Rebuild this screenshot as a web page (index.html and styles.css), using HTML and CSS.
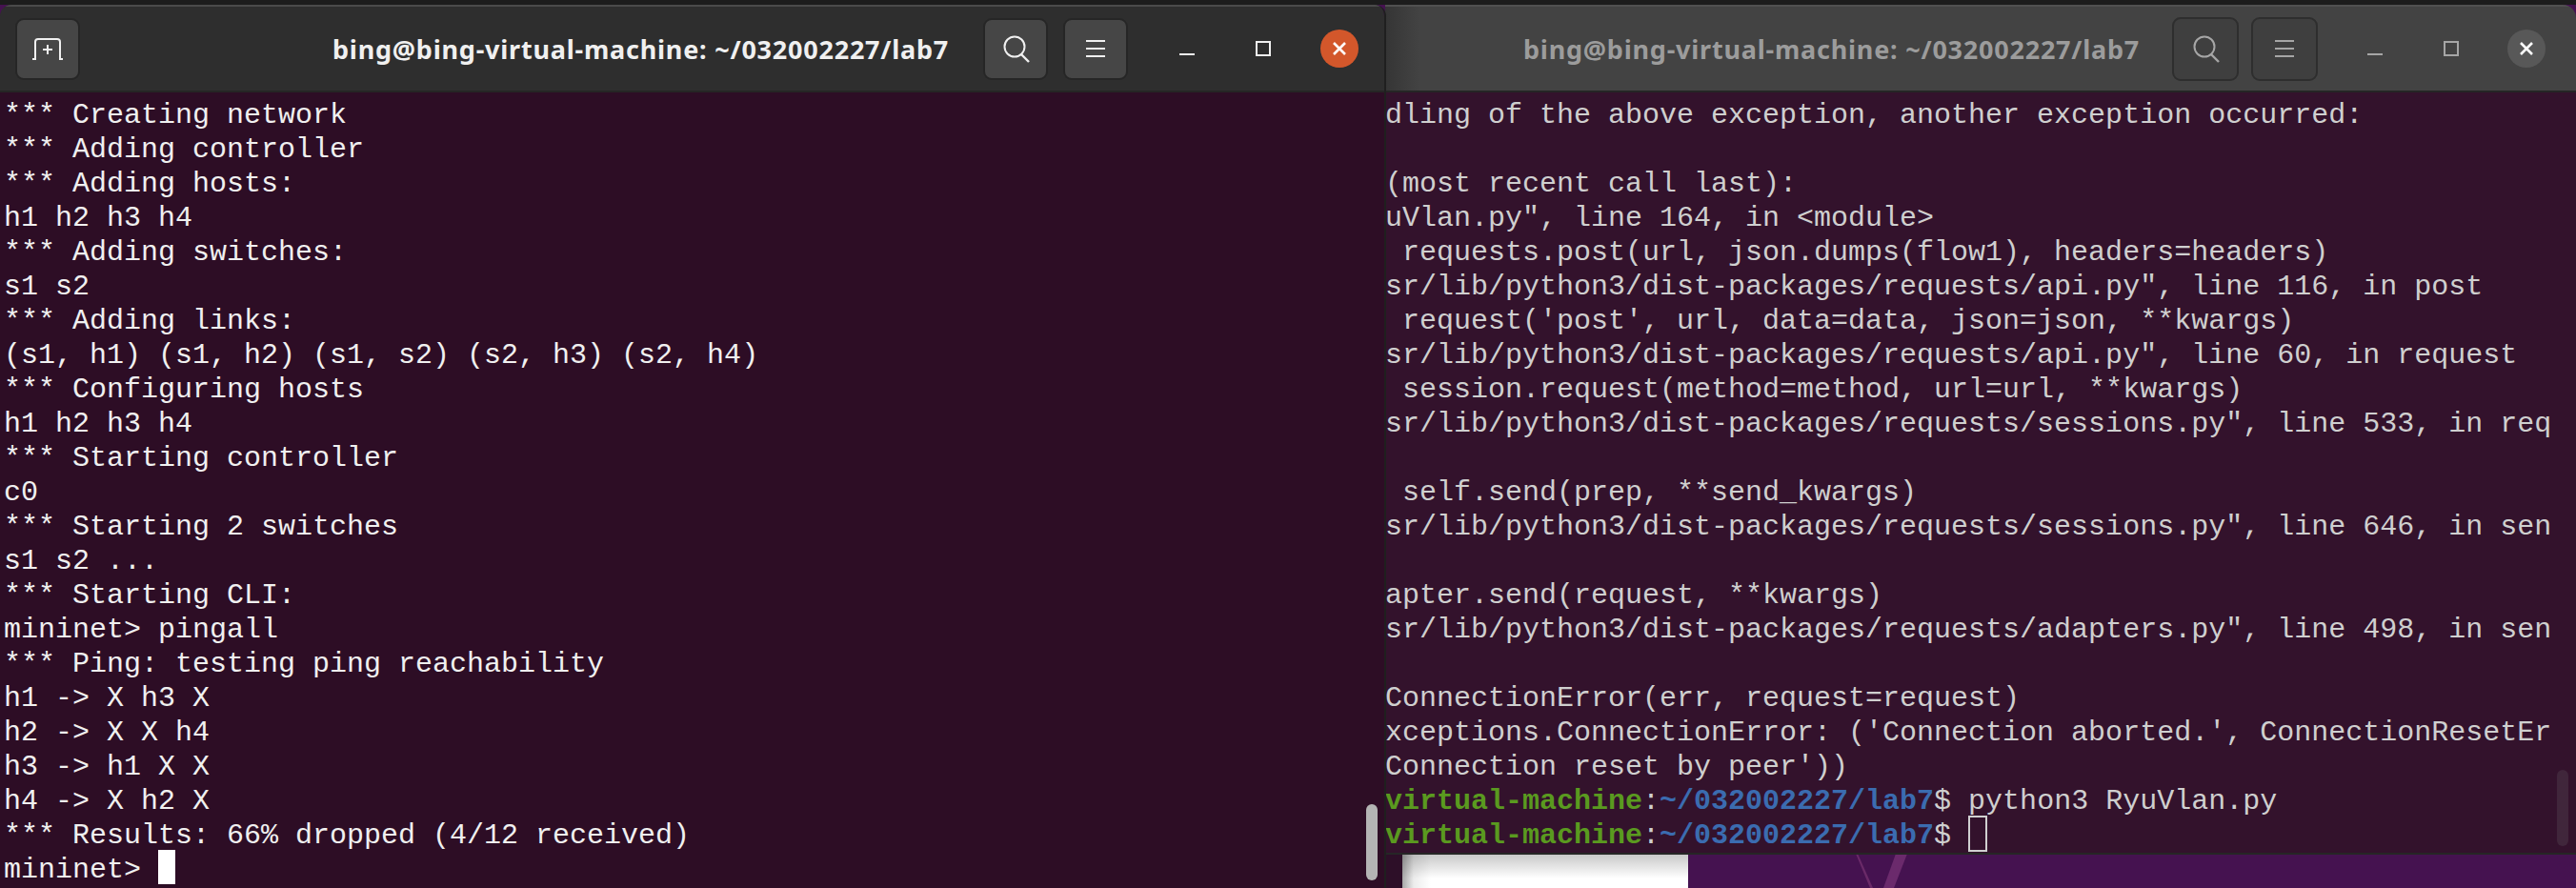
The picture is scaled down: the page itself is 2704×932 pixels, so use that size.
FILE: index.html
```html
<!DOCTYPE html>
<html lang="en">
<head>
<meta charset="utf-8">
<title>Terminals</title>
<link rel="stylesheet" href="styles.css">
</head>
<body>
<div class="desktop">
  <div class="topbar"></div>
  <svg class="streaks" width="100" height="40" viewBox="0 0 100 40"><path d="M8 0 L10 0 L26 36 L23 36 Z" fill="#6a2a68"/><path d="M50 0 L62 0 L48 36 L37 36 Z" fill="#6b2a6c"/></svg>
  <div class="sheet"></div>

  <section class="win win-right">
    <header class="bar">
      <h1 class="title">bing@bing-virtual-machine: ~/032002227/lab7</h1>
      <button class="btn"><svg width="32" height="32" viewBox="0 0 32 32"><circle cx="15" cy="14" r="10.5" fill="none" stroke="currentColor" stroke-width="2"/><path d="M22 22 L30 30" stroke="currentColor" stroke-width="2.4"/></svg></button>
      <button class="btn"><svg width="22" height="20" viewBox="0 0 22 20"><path d="M1 2H21M1 10H21M1 18H21" stroke="currentColor" stroke-width="2"/></svg></button>
      <span class="wc wc-min"></span>
      <span class="wc wc-max"></span>
      <span class="wc wc-close"><svg width="16" height="16" viewBox="0 0 16 16"><path d="M2 2L14 14M14 2L2 14" stroke="#fff" stroke-width="2.6"/></svg></span>
    </header>
    <pre class="term">dling of the above exception, another exception occurred:

(most recent call last):
uVlan.py", line 164, in &lt;module&gt;
 requests.post(url, json.dumps(flow1), headers=headers)
sr/lib/python3/dist-packages/requests/api.py", line 116, in post
 request('post', url, data=data, json=json, **kwargs)
sr/lib/python3/dist-packages/requests/api.py", line 60, in request
 session.request(method=method, url=url, **kwargs)
sr/lib/python3/dist-packages/requests/sessions.py", line 533, in req

 self.send(prep, **send_kwargs)
sr/lib/python3/dist-packages/requests/sessions.py", line 646, in sen

apter.send(request, **kwargs)
sr/lib/python3/dist-packages/requests/adapters.py", line 498, in sen

ConnectionError(err, request=request)
xceptions.ConnectionError: ('Connection aborted.', ConnectionResetEr
Connection reset by peer'))
<b class="host">virtual-machine</b>:<b class="path">~/032002227/lab7</b>$ python3 RyuVlan.py
<b class="host">virtual-machine</b>:<b class="path">~/032002227/lab7</b>$ <span class="cursor-hollow"> </span></pre>
    <div class="thumb thumb-dim"></div>
  </section>

  <section class="win win-left">
    <header class="bar">
      <button class="btn btn-add"><svg width="32" height="24" viewBox="0 0 32 24"><path d="M0 23H3V5Q3 2 6 2H26Q29 2 29 5V23H32" fill="none" stroke="currentColor" stroke-width="2"/><path d="M16 8V18M11 13H21" stroke="currentColor" stroke-width="2"/></svg></button>
      <h1 class="title">bing@bing-virtual-machine: ~/032002227/lab7</h1>
      <button class="btn"><svg width="32" height="32" viewBox="0 0 32 32"><circle cx="15" cy="14" r="10.5" fill="none" stroke="currentColor" stroke-width="2"/><path d="M22 22 L30 30" stroke="currentColor" stroke-width="2.4"/></svg></button>
      <button class="btn"><svg width="22" height="20" viewBox="0 0 22 20"><path d="M1 2H21M1 10H21M1 18H21" stroke="currentColor" stroke-width="2"/></svg></button>
      <span class="wc wc-min"></span>
      <span class="wc wc-max"></span>
      <span class="wc wc-close"><svg width="16" height="16" viewBox="0 0 16 16"><path d="M2 2L14 14M14 2L2 14" stroke="#fff" stroke-width="2.6"/></svg></span>
    </header>
    <pre class="term">*** Creating network
*** Adding controller
*** Adding hosts:
h1 h2 h3 h4
*** Adding switches:
s1 s2
*** Adding links:
(s1, h1) (s1, h2) (s1, s2) (s2, h3) (s2, h4)
*** Configuring hosts
h1 h2 h3 h4
*** Starting controller
c0
*** Starting 2 switches
s1 s2 ...
*** Starting CLI:
mininet&gt; pingall
*** Ping: testing ping reachability
h1 -&gt; X h3 X
h2 -&gt; X X h4
h3 -&gt; h1 X X
h4 -&gt; X h2 X
*** Results: 66% dropped (4/12 received)
mininet&gt; <span class="cursor-solid"> </span></pre>
    <div class="thumb"></div>
  </section>
</div>
</body>
</html>
```
FILE: styles.css
```css
* { box-sizing: border-box; }
html, body { margin: 0; padding: 0; }
body { width: 2704px; height: 932px; overflow: hidden; background: #451250; }

.desktop { position: relative; width: 2704px; height: 932px; overflow: hidden; background: #451250; }
.topbar { position: absolute; left: 0; top: 0; width: 100%; height: 5px; background: #1c1c1c; }
.streaks { position: absolute; left: 1940px; top: 896px; }
.sheet {
  position: absolute; left: 1454px; top: 896px; width: 318px; height: 36px;
  border-left: 18px solid #2d0f28;
  background: linear-gradient(180deg, rgba(0,0,0,0.22) 0, rgba(0,0,0,0) 26px), linear-gradient(90deg, #a8a8a8 0, #ececec 12px, #fff 30px), #fff;
}

.win { position: absolute; top: 5px; display: flex; flex-direction: column; overflow: hidden; }
.win-left { left: 0; width: 1455px; height: 927px; z-index: 2; border-radius: 12px 12px 0 0; border-right: 2px solid #1f1f1f; --bar: #2e2e2e; --term: #2d0d25; --fg: #f0f0f0; color: #f0f0f0; }
.win-right { left: 1454px; width: 1250px; height: 892px; z-index: 1; border-radius: 0 14px 0 0; border-bottom: 2px solid #262626; --bar: #434343; --term: #33122c; --fg: #cfcfcf; color: #a6a6a6; }

.bar {
  flex: none; height: 92px; display: flex; align-items: center;
  background: var(--bar); border-top: 2px solid #4a4a4a; border-bottom: 2px solid #252525;
}
.win-left .bar { padding-left: 16px; }
.win-right .bar { background: linear-gradient(90deg, #353535 0, #434343 36px); border-top-color: #505050; }

.title {
  margin: 0 auto 0 0; font: 700 27px/1 "Noto Sans", sans-serif; letter-spacing: 0.77px; white-space: nowrap;
}
.win-left .title { padding-left: 265px; }
.win-right .title { padding-left: 145px; color: #9c9c9c; }

.btn {
  flex: none; width: 68px; height: 65px; margin-left: 16px; padding: 0; display: flex; align-items: center; justify-content: center;
  color: inherit; background: #464646; border: 2px solid #262626; border-radius: 9px;
}
.btn-add { margin-left: 0; }
.win-right .btn { background: #3f3f3f; border-color: #2e2e2e; width: 70px; height: 67px; margin-left: 13px; }

.wc { flex: none; display: block; }
.wc-min { width: 16px; height: 2px; margin: 12px 0 0 54px; background: currentColor; }
.wc-max { width: 16px; height: 16px; margin: 0 0 0 64px; border: 2px solid currentColor; }
.wc-close { width: 40px; height: 40px; margin: 0 27px 0 52px; border-radius: 50%; background: #d3572b; display: flex; align-items: center; justify-content: center; }
.win-right .wc-min { margin-left: 52px; }
.win-right .wc-close { background: #585858; margin: 0 32px 0 51px; }

.term {
  flex: 1; margin: 0; padding: 6px 0 0 4px; overflow: hidden; background: var(--term); color: var(--fg);
  font: 400 30px/36px "Liberation Mono", "DejaVu Sans Mono", monospace;
}
.win-right .term { padding-left: 0; }
.host { color: #5a9a1f; font-weight: 700; }
.path { color: #3b6cb0; font-weight: 700; }
.cursor-solid { display: inline-block; width: 18px; height: 36px; margin-top: -3px; background: #fff; vertical-align: top; }
.cursor-hollow { display: inline-block; width: 20px; height: 38px; margin-top: -3px; border: 2px solid #d0d0d0; vertical-align: top; }

.thumb { position: absolute; right: 7px; top: 839px; width: 12px; height: 80px; border-radius: 6px; background: #b4b4b4; }
.thumb-dim { right: 8px; top: 803px; background: #40263b; }
```
